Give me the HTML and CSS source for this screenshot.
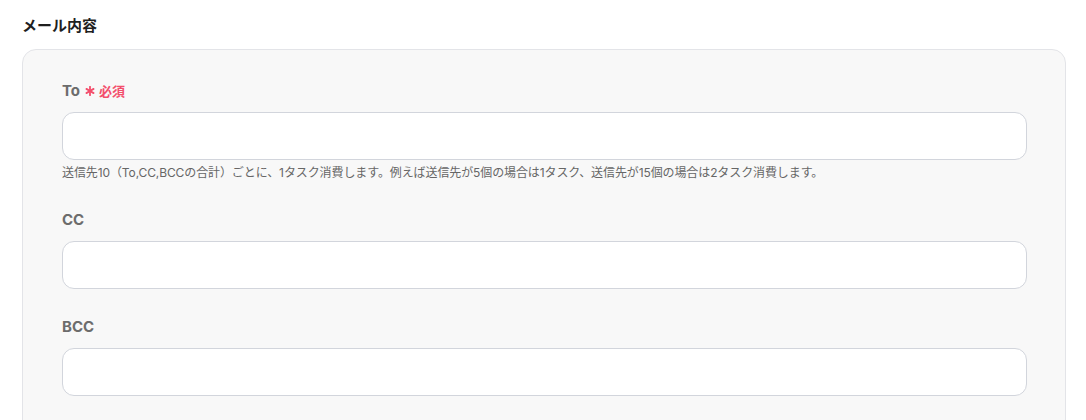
FILE: index.html
```html
<!DOCTYPE html>
<html lang="ja">
<head>
    <meta charset="UTF-8">
    <meta name="viewport" content="width=device-width, initial-scale=1.0">
    <title>メール内容</title>
    <link rel="stylesheet" href="styles.css">
</head>
<body>
    <div class="section">
        <h2 class="section-title">メール内容</h2>

        <div class="panel">
            <div class="field">
                <label class="field-label" for="to">To
                    <span class="required">
                        <svg class="mark" viewBox="0 0 10 10" width="10" height="10" aria-hidden="true">
                            <g stroke="currentColor" stroke-width="1.8" stroke-linecap="round">
                                <line x1="5" y1="0.8" x2="5" y2="9.2"/>
                                <line x1="1.4" y1="2.9" x2="8.6" y2="7.1"/>
                                <line x1="1.4" y1="7.1" x2="8.6" y2="2.9"/>
                            </g>
                        </svg>必須</span>
                </label>
                <input id="to" class="field-input" type="text">
                <p class="field-help">送信先10（To,CC,BCCの合計）ごとに、1タスク消費します。例えば送信先が5個の場合は1タスク、送信先が15個の場合は2タスク消費します。</p>
            </div>

            <div class="field">
                <label class="field-label" for="cc">CC</label>
                <input id="cc" class="field-input" type="text">
            </div>

            <div class="field">
                <label class="field-label" for="bcc">BCC</label>
                <input id="bcc" class="field-input" type="text">
            </div>
        </div>
    </div>
</body>
</html>
```

FILE: styles.css
```css
body {
    margin: 0;
    background: #fff;
    font-family: "Inter", "Noto Sans CJK JP", sans-serif;
    color: #222;
}

.section {
    padding: 15px 20px 0 22px;
}

.section-title {
    margin: 0 0 12px;
    font-size: 15px;
    line-height: 22px;
    font-weight: 700;
    color: #1f1f1f;
}

.panel {
    background: #f8f8f8;
    border: 1px solid #e3e4e8;
    border-radius: 14px;
    padding: 31px 38px 40px 39px;
    display: flex;
    flex-direction: column;
    gap: 28px;
}

.field {
    display: flex;
    flex-direction: column;
}

.field-label {
    display: flex;
    align-items: center;
    gap: 5px;
    font-size: 15px;
    line-height: 20px;
    font-weight: 700;
    color: #6c6c6c;
    margin-bottom: 11px;
}

.required {
    display: inline-flex;
    align-items: center;
    gap: 4px;
    color: #f34e6c;
    font-size: 13px;
}

.mark {
    display: block;
}

.field-input {
    box-sizing: border-box;
    height: 48px;
    width: 100%;
    border: 1px solid #d2d5dc;
    border-radius: 12px;
    background: #fff;
    font: inherit;
    padding: 0 14px;
    margin: 0;
}

.field-help {
    margin: 4px 0 0;
    font-size: 12px;
    line-height: 18px;
    color: #666;
    letter-spacing: -0.1px;
}
```
